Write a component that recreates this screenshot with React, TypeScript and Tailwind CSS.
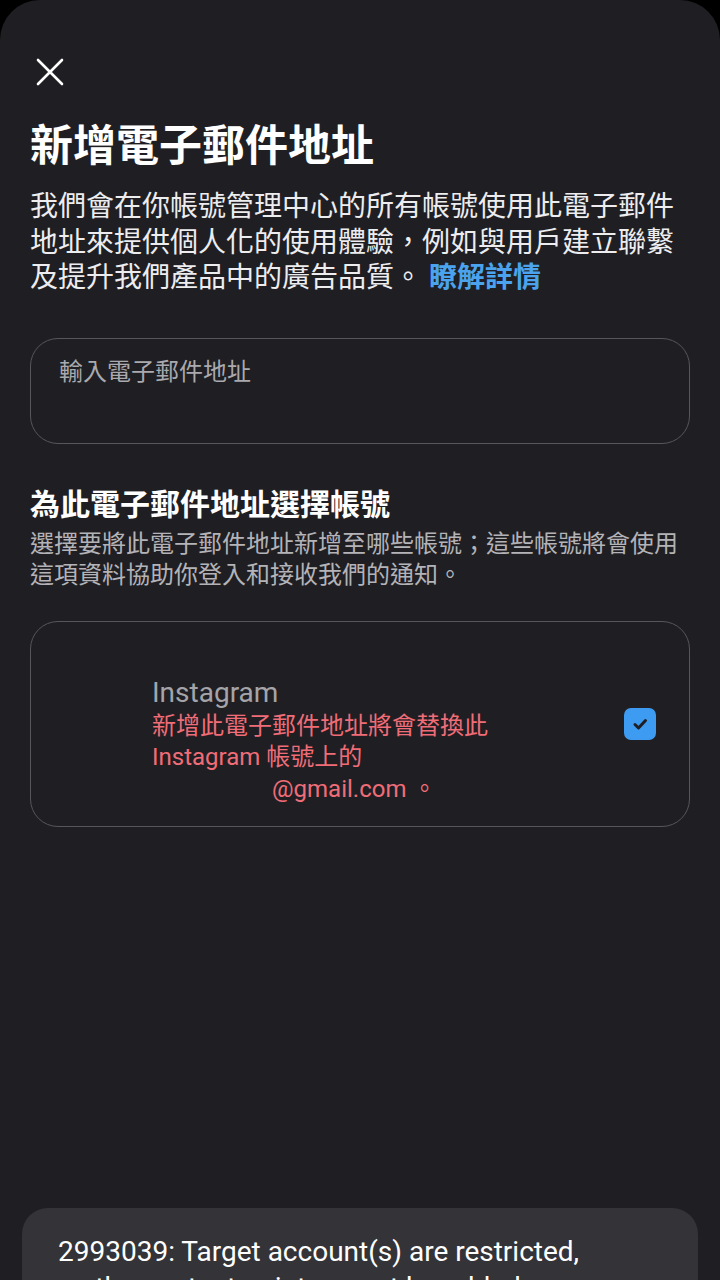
export default function App() {
  return (
    <div
      className="relative h-[1280px] w-[720px] overflow-hidden bg-black"
      style={{ fontFamily: 'Roboto, "Noto Sans CJK TC", sans-serif' }}
    >
      <div className="flex h-full flex-col rounded-t-[40px] bg-[#1f1f23] px-[30px] pt-[58px]">
        <button className="ml-[6px] h-[28px] w-[28px]">
          <svg viewBox="0 0 28 28" className="h-[28px] w-[28px]" fill="none" stroke="white" strokeWidth="2.6" strokeLinecap="round">
            <path d="M2 2 L26 26 M26 2 L2 26" />
          </svg>
        </button>

        <h1 className="mt-[34px] text-[43px] font-bold leading-[52px] text-white">新增電子郵件地址</h1>
        <p className="mt-[17px] text-[28px] leading-[35.5px] text-[#ededf0]">
          我們會在你帳號管理中心的所有帳號使用此電子郵件地址來提供個人化的使用體驗，例如與用戶建立聯繫及提升我們產品中的廣告品質。
          <span className="font-bold text-[#4ba3ee]"> 瞭解詳情</span>
        </p>

        <div className="mt-[42px] h-[106px] rounded-[28px] border-[1.5px] border-[#56565b] px-[28px] pt-[18px]">
          <div className="text-[24px] leading-[30px] text-[#a9a9ae]">輸入電子郵件地址</div>
        </div>

        <h2 className="mt-[41px] text-[30px] font-bold leading-[40px] text-white">為此電子郵件地址選擇帳號</h2>
        <p className="mt-[4px] text-[24px] leading-[31px] text-[#b3b3b8]">
          選擇要將此電子郵件地址新增至哪些帳號；這些帳號將會使用這項資料協助你登入和接收我們的通知。
        </p>

        <div className="mt-[30px] flex h-[206px] items-center rounded-[28px] border-[1.5px] border-[#56565b] pl-[121px] pr-[33px]">
          <div className="flex-1 self-start pt-[54px]">
            <div className="text-[28px] leading-[34px] text-[#a4a4a9]">Instagram</div>
            <div className="mt-[1px] text-[24px] leading-[31.5px] text-[#f06d78]">
              新增此電子郵件地址將會替換此
              <br />
              Instagram 帳號上的
              <br />
              <span className="ml-[120px]">@gmail.com 。</span>
            </div>
          </div>
          <div className="flex h-[32px] w-[32px] items-center justify-center rounded-[7px] bg-[#3d9cf2]">
            <svg viewBox="0 0 20 20" className="h-[20px] w-[20px]" fill="none" stroke="#1f1f23" strokeWidth="3" strokeLinecap="round" strokeLinejoin="round">
              <path d="M5 10.5 L8.5 14 L15.5 6.5" />
            </svg>
          </div>
        </div>
      </div>

      <div className="absolute left-[22px] top-[1208px] h-[120px] w-[676px] rounded-[26px] bg-[#333338] px-[36px] pt-[26px]">
        <p className="text-[28px] leading-[36px] text-white">
          2993039: Target account(s) are restricted,
          <br />
          so the contact point cannot be added.
        </p>
      </div>
    </div>
  );
}
